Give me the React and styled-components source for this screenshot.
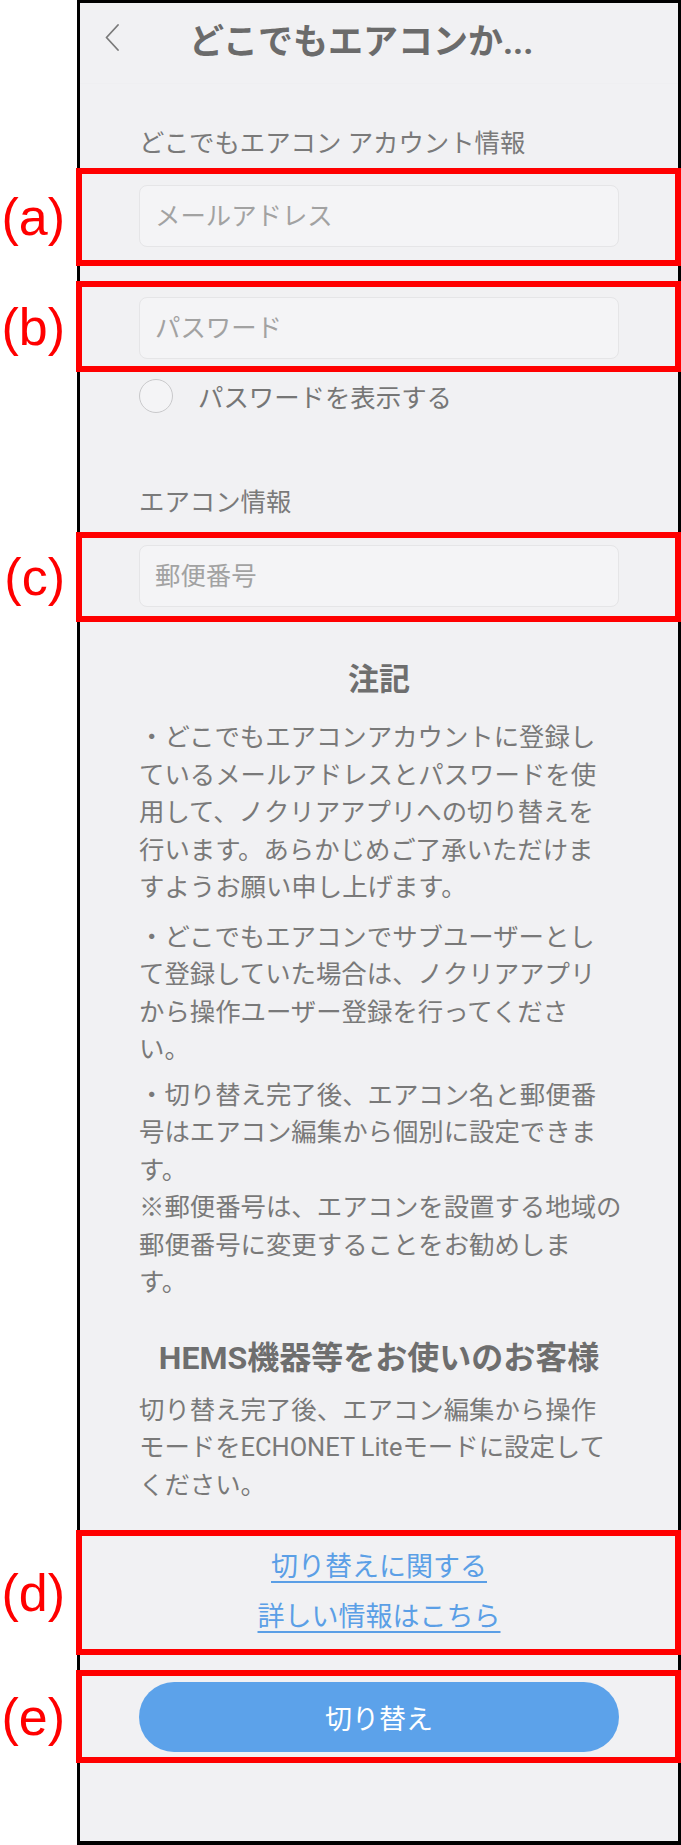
import React from "react";
import styled, { createGlobalStyle } from "styled-components";

const GlobalStyle = createGlobalStyle`
  html, body {
    margin: 0;
    padding: 0;
    background: #ffffff;
  }
  * {
    box-sizing: border-box;
  }
`;

const jp = `Roboto, "Noto Sans CJK JP", "Noto Sans", sans-serif`;

const Page = styled.div`
  width: 681px;
  height: 1845px;
  display: flex;
  padding-left: 77px;
  font-family: ${jp};
`;

const Phone = styled.div`
  width: 604px;
  height: 1845px;
  border: 3px solid #000;
  border-bottom-width: 4px;
  background: #f1f1f3;
  display: flex;
  flex-direction: column;
`;

const Header = styled.div`
  height: 81px;
  flex-shrink: 0;
  display: flex;
  align-items: center;
  padding-left: 25px;
  border-bottom: 1px solid #efeff1;

  svg {
    margin-bottom: 11px;
  }
`;

const Title = styled.h1`
  margin: 0 0 0 70px;
  font-size: 35px;
  font-weight: 700;
  line-height: 46px;
  color: #6b6b6b;
  white-space: nowrap;
`;

const SectionLabel = styled.div`
  margin-top: ${(p) => p.$top}px;
  padding: 0 59px;
  font-size: 25.4px;
  line-height: 36px;
  color: #7a7a7a;
  white-space: nowrap;
`;

const Annotated = styled.div`
  position: relative;
  margin-top: ${(p) => p.$top}px;
  padding: ${(p) => p.$pt}px 59px ${(p) => p.$pb}px;

  &::after {
    content: "";
    position: absolute;
    top: 0;
    bottom: 0;
    left: -4px;
    right: -3px;
    border: 6px solid #ff0000;
    pointer-events: none;
  }
`;

const Tag = styled.span`
  position: absolute;
  right: calc(100% + 15px);
  top: 50%;
  transform: translateY(-50%);
  font-family: "Liberation Sans", Arial, sans-serif;
  font-size: 52px;
  line-height: 1;
  color: #ff0000;
  white-space: nowrap;
`;

const Input = styled.input`
  display: block;
  width: 100%;
  height: 62px;
  margin: 0;
  padding: 0 15px;
  border: 1px solid #e5e5e7;
  border-radius: 8px;
  background: #f4f4f6;
  font-family: ${jp};
  font-size: 25.4px;
  color: #555;
  outline: none;

  &::placeholder {
    color: #a2a2a2;
  }
`;

const RadioRow = styled.label`
  margin-top: 7px;
  padding: 0 59px;
  height: 34px;
  display: flex;
  align-items: center;
  gap: 25px;
  font-size: 25.4px;
  color: #767676;
`;

const Circle = styled.span`
  width: 34px;
  height: 34px;
  border-radius: 50%;
  border: 1.5px solid #c9c9cb;
  background: #f4f4f6;
  flex-shrink: 0;
`;

const Heading = styled.h2`
  margin: ${(p) => p.$top}px 0 0;
  text-align: center;
  font-size: ${(p) => p.$size}px;
  font-weight: 700;
  line-height: 44px;
  color: #6e6e6e;
  white-space: nowrap;
`;

const Note = styled.p`
  margin: ${(p) => p.$top}px 0 0;
  padding: 0 40px 0 59px;
  font-size: 25.4px;
  line-height: 37.5px;
  color: #797979;
  white-space: nowrap;
`;

const Links = styled.div`
  display: flex;
  flex-direction: column;
  align-items: center;
`;

const TextLink = styled.a`
  font-size: 27px;
  line-height: 50px;
  color: #5b9fe6;
  text-decoration: underline;
  text-decoration-thickness: 2px;
  text-underline-offset: 5px;
  cursor: pointer;
`;

const SwitchButton = styled.button`
  display: block;
  width: 100%;
  height: 70px;
  border: none;
  border-radius: 35px;
  background: #5ca2ea;
  color: #ffffff;
  font-family: ${jp};
  font-size: 27px;
  cursor: pointer;
`;

function BackIcon() {
  return (
    <svg width="14" height="27" viewBox="0 0 14 27" fill="none">
      <polyline
        points="13,1 1.5,13.5 13,26"
        stroke="#7a7a7a"
        strokeWidth="1.8"
        strokeLinecap="round"
        strokeLinejoin="round"
      />
    </svg>
  );
}

export default function App() {
  return (
    <>
      <GlobalStyle />
      <Page>
        <Phone>
          <Header>
            <BackIcon />
            <Title>どこでもエアコンか...</Title>
          </Header>

          <SectionLabel $top={41}>どこでもエアコン アカウント情報</SectionLabel>
          <Annotated $top={7} $pt={17} $pb={19}>
            <Tag>(a)</Tag>
            <Input type="email" placeholder="メールアドレス" />
          </Annotated>
          <Annotated $top={15} $pt={16} $pb={13}>
            <Tag>(b)</Tag>
            <Input type="password" placeholder="パスワード" />
          </Annotated>
          <RadioRow>
            <Circle />
            パスワードを表示する
          </RadioRow>

          <SectionLabel $top={71}>エアコン情報</SectionLabel>
          <Annotated $top={12} $pt={13} $pb={15}>
            <Tag>(c)</Tag>
            <Input type="text" placeholder="郵便番号" />
          </Annotated>

          <Heading $top={36} $size={31}>注記</Heading>
          <Note $top={17}>
            ・どこでもエアコンアカウントに登録し<br />
            ているメールアドレスとパスワードを使<br />
            用して、ノクリアアプリへの切り替えを<br />
            行います。あらかじめご了承いただけま<br />
            すようお願い申し上げます。
          </Note>
          <Note $top={12}>
            ・どこでもエアコンでサブユーザーとし<br />
            て登録していた場合は、ノクリアアプリ<br />
            から操作ユーザー登録を行ってくださ<br />
            い。
          </Note>
          <Note $top={8}>
            ・切り替え完了後、エアコン名と郵便番<br />
            号はエアコン編集から個別に設定できま<br />
            す。<br />
            ※郵便番号は、エアコンを設置する地域の<br />
            郵便番号に変更することをお勧めしま<br />
            す。
          </Note>

          <Heading $top={34} $size={32}>HEMS機器等をお使いのお客様</Heading>
          <Note $top={12}>
            切り替え完了後、エアコン編集から操作<br />
            モードをECHONET Liteモードに設定して<br />
            ください。
          </Note>

          <Annotated $top={26} $pt={12} $pb={13}>
            <Tag>(d)</Tag>
            <Links>
              <TextLink>切り替えに関する</TextLink>
              <TextLink>詳しい情報はこちら</TextLink>
            </Links>
          </Annotated>
          <Annotated $top={15} $pt={12} $pb={11}>
            <Tag>(e)</Tag>
            <SwitchButton>切り替え</SwitchButton>
          </Annotated>
        </Phone>
      </Page>
    </>
  );
}
